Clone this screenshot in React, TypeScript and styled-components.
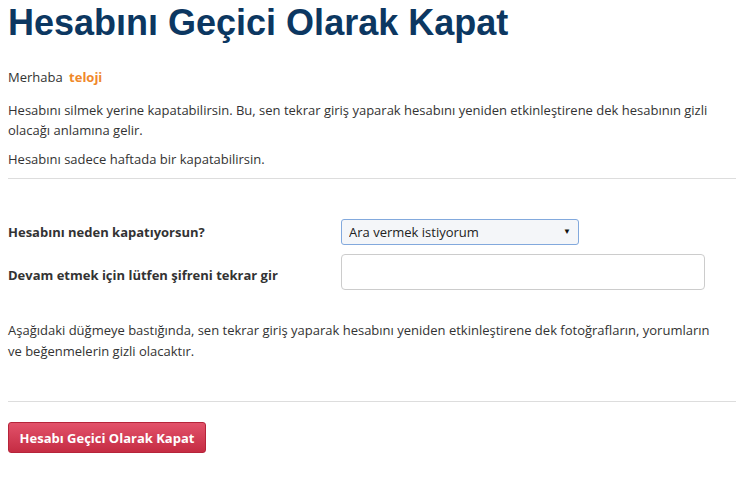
import React from "react";
import styled, { createGlobalStyle } from "styled-components";

const Global = createGlobalStyle`
  html, body {
    margin: 0;
    padding: 0;
    background: #fff;
  }
  body {
    font-family: "Open Sans", "Noto Sans", sans-serif;
    font-size: 13px;
    line-height: 20px;
    color: #333;
  }
`;

export default function App() {
  return (
    <>
      <Global />
      <S.Page>
        <S.Title>Hesabını Geçici Olarak Kapat</S.Title>
        <S.Greeting>
          Merhaba <S.User>teloji</S.User>
        </S.Greeting>
        <S.Text>
          Hesabını silmek yerine kapatabilirsin. Bu, sen tekrar giriş yaparak
          hesabını yeniden etkinleştirene dek hesabının gizli olacağı anlamına
          gelir.
        </S.Text>
        <S.Text>Hesabını sadece haftada bir kapatabilirsin.</S.Text>
        <S.Rule $after={40} />
        <S.Form>
          <S.Label>Hesabını neden kapatıyorsun?</S.Label>
          <S.SelectWrap>
            <S.Select defaultValue="ara">
              <option value="ara">Ara vermek istiyorum</option>
            </S.Select>
            <S.Caret>▼</S.Caret>
          </S.SelectWrap>
          <S.Label $shift={3}>Devam etmek için lütfen şifreni tekrar gir</S.Label>
          <S.Input type="password" />
        </S.Form>
        <S.Notice>
          Aşağıdaki düğmeye bastığında, sen tekrar giriş yaparak hesabını yeniden
          etkinleştirene dek fotoğrafların, yorumların ve beğenmelerin gizli
          olacaktır.
        </S.Notice>
        <S.Rule $after={20} />
        <S.Danger type="button">Hesabı Geçici Olarak Kapat</S.Danger>
      </S.Page>
    </>
  );
}

const S = {
  Page: styled.div`
    width: 728px;
    padding: 0 8px;
  `,
  Title: styled.h1`
    margin: 3px 0 0;
    font-family: "Liberation Sans", Arial, sans-serif;
    font-size: 36px;
    line-height: 40px;
    font-weight: bold;
    color: #0c3761;
  `,
  Greeting: styled.div`
    margin-top: 24px;
    height: 20px;
  `,
  User: styled.span`
    margin-left: 3px;
    color: #f0892b;
    font-weight: bold;
  `,
  Text: styled.p`
    margin: 13px 0 0;
    & + & {
      margin-top: 9px;
    }
  `,
  Rule: styled.hr<{ $after: number }>`
    margin: 9px 0 ${(p) => p.$after}px;
    border: 0;
    border-top: 1px solid #ddd;
    width: 728px;
  `,
  Form: styled.div`
    display: grid;
    grid-template-columns: 333px auto;
    row-gap: 9px;
    align-items: center;
    justify-items: start;
  `,
  Label: styled.label<{ $shift?: number }>`
    font-weight: bold;
    position: relative;
    top: ${(p) => p.$shift ?? 0}px;
  `,
  SelectWrap: styled.div`
    position: relative;
    width: 238px;
    height: 26px;
  `,
  Select: styled.select`
    appearance: none;
    width: 100%;
    height: 100%;
    box-sizing: border-box;
    padding: 0 20px 0 7px;
    font-family: "Open Sans", "Noto Sans", sans-serif;
    font-size: 13px;
    color: #222;
    background: #f4f6f9;
    border: 1px solid #82a9dd;
    border-radius: 3px;
    outline: none;
  `,
  Caret: styled.span`
    position: absolute;
    right: 8px;
    top: 6px;
    font-size: 8px;
    line-height: 12px;
    color: #111;
    pointer-events: none;
  `,
  Input: styled.input`
    width: 364px;
    height: 36px;
    box-sizing: border-box;
    border: 1px solid #ccc;
    border-radius: 4px;
    background: #fff;
    outline: none;
  `,
  Notice: styled.p`
    max-width: 714px;
    margin: 30px 0 0;
    line-height: 21px;
    padding-bottom: 30px;
  `,
  Danger: styled.button`
    width: 198px;
    height: 31px;
    padding: 0;
    border: 1px solid #b6243a;
    border-radius: 3px;
    background: linear-gradient(#e2526a, #c52c43);
    color: #fff;
    font-family: "Open Sans", "Noto Sans", sans-serif;
    font-size: 13px;
    font-weight: bold;
    cursor: pointer;
  `,
};
